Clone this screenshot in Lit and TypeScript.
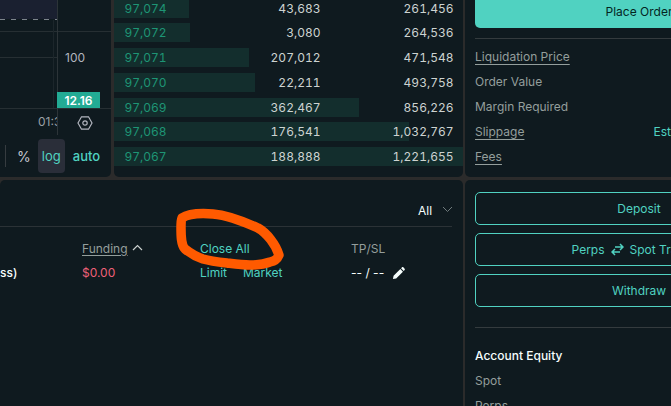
import { LitElement, css, html } from "lit";
import { customElement } from "lit/decorators.js";

const book = [
  { price: "97,074", size: "43,683", total: "261,456", bar: 75 },
  { price: "97,072", size: "3,080", total: "264,536", bar: 76 },
  { price: "97,071", size: "207,012", total: "471,548", bar: 135 },
  { price: "97,070", size: "22,211", total: "493,758", bar: 141 },
  { price: "97,069", size: "362,467", total: "856,226", bar: 245 },
  { price: "97,068", size: "176,541", total: "1,032,767", bar: 295 },
  { price: "97,067", size: "188,888", total: "1,221,655", bar: 349 },
];

@customElement("app-root")
export class AppRoot extends LitElement {
  static styles = css`
    :host {
      display: block;
      position: relative;
      width: 671px;
      height: 406px;
      overflow: hidden;
      background: #2b2b2b;
      font-family: Inter, "Liberation Sans", sans-serif;
      font-size: 12px;
      color: #cdd3d1;
    }
    .page {
      display: grid;
      grid-template-columns: 463px 1fr;
      grid-template-rows: 177px 1fr;
      column-gap: 2px;
      row-gap: 3px;
      height: 406px;
      width: 800px;
    }
    .panel {
      background: #0f1a1f;
      overflow: hidden;
    }
    .top-left {
      display: flex;
      gap: 3px;
      background: #2b2b2b;
      min-width: 0;
    }
    .chart {
      position: relative;
      width: 111px;
      flex: none;
      border-radius: 0 0 5px 0;
    }
    .shade {
      position: absolute;
      left: 0;
      top: 0;
      width: 57px;
      height: 19px;
      background: #1a2030;
    }
    .dash {
      position: absolute;
      left: 0;
      top: 19px;
      width: 57px;
      height: 1px;
      background: repeating-linear-gradient(90deg, #7d848c 0 5px, transparent 5px 11px);
    }
    .vline {
      position: absolute;
      left: 57px;
      top: 0;
      width: 1px;
      height: 135px;
      background: #2c3438;
    }
    .vfaint {
      position: absolute;
      left: 53px;
      top: 20px;
      width: 1px;
      height: 88px;
      background: #1c262b;
    }
    .hline {
      position: absolute;
      left: 0;
      height: 1px;
      background: #262f33;
    }
    .scale {
      position: absolute;
      left: 65px;
      top: 50px;
      font-size: 12px;
      color: #b2b5be;
    }
    .tag {
      position: absolute;
      left: 57px;
      top: 92px;
      width: 43px;
      height: 16px;
      line-height: 17px;
      text-align: center;
      background: #22ab94;
      color: #fff;
      font-size: 12px;
      font-weight: 600;
    }
    .time {
      position: absolute;
      left: 38px;
      top: 114px;
      width: 19px;
      overflow: hidden;
      white-space: nowrap;
      color: #9aa0a6;
    }
    .gear {
      position: absolute;
      left: 77px;
      top: 115px;
    }
    .tools {
      position: absolute;
      left: 5px;
      top: 139px;
      display: flex;
      align-items: center;
      height: 34px;
    }
    .tools i {
      display: block;
      width: 1px;
      height: 22px;
      background: #363c40;
    }
    .tools .pct {
      margin-left: 11px;
      margin-right: 7px;
      font-size: 14px;
      color: #c3c6ce;
    }
    .tools .on {
      width: 27px;
      height: 34px;
      line-height: 34px;
      text-align: center;
      border-radius: 4px;
      background: #2a2e39;
      color: #50d2c1;
      font-size: 13px;
    }
    .tools .auto {
      margin-left: 8px;
      font-size: 13px;
      font-weight: 500;
      color: #50d2c1;
    }
    .orderbook {
      flex: 1;
      display: flex;
      flex-direction: column;
      border-radius: 0 0 5px 5px;
    }
    .rows {
      display: flex;
      flex-direction: column;
      margin-top: -1.3px;
    }
    .row {
      position: relative;
      height: 19px;
      margin-bottom: 5.75px;
      display: grid;
      grid-template-columns: 70px 126px 133px;
      align-items: center;
      padding-left: 10.5px;
    }
    .row .bar {
      position: absolute;
      left: 0;
      top: 0;
      bottom: 0;
      background: #132e2d;
    }
    .row span {
      position: relative;
      text-align: right;
      font-variant-numeric: tabular-nums;
    }
    .row .price {
      text-align: left;
      color: #1e9575;
    }
    .order {
      border-radius: 0 0 0 5px;
      padding: 0 0 0 10px;
    }
    .place {
      width: 328px;
      height: 28px;
      line-height: 23px;
      padding-bottom: 5px;
      box-sizing: border-box;
      text-align: center;
      border-radius: 0 0 0 5px;
      background: #50d2c1;
      color: #04251f;
      font-size: 12px;
    }
    .divider {
      height: 1px;
      background: #343b3e;
      margin-top: 10px;
    }
    .facts {
      display: flex;
      flex-direction: column;
      margin-top: 6px;
      color: #949e9c;
    }
    .facts div {
      height: 25px;
      line-height: 24px;
      display: flex;
    }
    .facts u {
      text-underline-offset: 3px;
    }
    .facts .est {
      margin-left: 129px;
      color: #50d2c1;
    }
    .positions {
      position: relative;
      border-radius: 5px 5px 0 0;
    }
    .filter {
      position: absolute;
      left: 418px;
      top: 23px;
      color: #f6fefd;
      font-weight: 400;
    }
    .rule {
      position: absolute;
      left: 0;
      top: 46px;
      width: 452px;
      height: 1px;
      background: #2b3236;
    }
    .cell {
      position: absolute;
      white-space: nowrap;
    }
    .muted {
      color: #949e9c;
    }
    .link {
      color: #50d2c1;
    }
    .account {
      border-radius: 5px 0 0 0;
      padding: 12px 0 0 10px;
    }
    .account button {
      display: flex;
      align-items: center;
      justify-content: center;
      gap: 6px;
      width: 328px;
      height: 33px;
      margin-bottom: 8px;
      padding: 0;
      background: none;
      border: 1px solid #50d2c1;
      border-radius: 5px;
      color: #50d2c1;
      font: inherit;
    }
    .account hr {
      height: 1px;
      margin: 20px 0 0;
      border: 0;
      background: #343b3e;
    }
    .account h4 {
      margin: 20px 0 0;
      font-size: 12px;
      line-height: 16px;
      font-weight: 500;
      color: #f6fefd;
    }
    .account p {
      margin: 9px 0 0;
      line-height: 16px;
      color: #949e9c;
    }
    .scribble {
      position: absolute;
      left: 170px;
      top: 200px;
      pointer-events: none;
    }
  `;

  render() {
    return html`
      <div class="page">
        <div class="top-left">
          <div class="panel chart">
            <div class="shade"></div>
            <div class="dash"></div>
            <div class="hline" style="top:31px;width:111px"></div>
            <div class="hline" style="top:57px;width:57px"></div>
            <div class="hline" style="top:108px;width:111px"></div>
            <div class="vfaint"></div>
            <div class="vline"></div>
            <div class="scale">100</div>
            <div class="tag">12.16</div>
            <div class="time">01:30</div>
            <svg class="gear" width="16" height="16" viewBox="0 0 16 16" fill="none" stroke="#b2b5be" stroke-width="1.2">
              <path d="M4.5 1.8h7L15 8l-3.500 6.200h-7L1 8z" />
              <circle cx="8" cy="8" r="2.200" />
            </svg>
            <div class="tools">
              <i></i>
              <span class="pct">%</span>
              <span class="on">log</span>
              <span class="auto">auto</span>
            </div>
          </div>
          <div class="panel orderbook">
            <div class="rows">
              ${book.map(
                (r) => html`
                  <div class="row">
                    <div class="bar" style="width:${r.bar}px"></div>
                    <span class="price">${r.price}</span>
                    <span>${r.size}</span>
                    <span>${r.total}</span>
                  </div>
                `
              )}
            </div>
          </div>
        </div>
        <div class="panel order">
          <div class="place">Place Order</div>
          <div class="divider"></div>
          <div class="facts">
            <div><u>Liquidation Price</u></div>
            <div>Order Value</div>
            <div>Margin Required</div>
            <div><u>Slippage</u><span class="est">Est</span></div>
            <div><u>Fees</u></div>
          </div>
        </div>
        <div class="panel positions">
          <div class="filter">All</div>
          <svg class="cell" style="left:442px;top:26px" width="11" height="7" viewBox="0 0 11 7" fill="none" stroke="#6f7a7c" stroke-width="1"><path d="M1 1l4.500 4.500L10 1" /></svg>
          <div class="rule"></div>
          <u class="cell muted" style="left:82px;top:61px;text-underline-offset:2px">Funding</u>
          <svg class="cell" style="left:132px;top:64px" width="11" height="7" viewBox="0 0 11 7" fill="none" stroke="#c9cfcd" stroke-width="1.200"><path d="M1 6l4.500-4.500L10 6" /></svg>
          <div class="cell link" style="left:200px;top:61px">Close All</div>
          <div class="cell muted" style="left:351px;top:61px">TP/SL</div>
          <div class="cell" style="left:0;top:85px;color:#f6fefd;font-weight:500">ss)</div>
          <div class="cell" style="left:82px;top:85px;color:#ed6078">$0.00</div>
          <div class="cell link" style="left:200px;top:85px">Limit</div>
          <div class="cell link" style="left:243px;top:85px">Market</div>
          <div class="cell" style="left:351px;top:85px;color:#f6fefd">-- / --</div>
          <svg class="cell" style="left:392px;top:87px" width="13" height="13" viewBox="0 0 14 14" fill="#f6fefd"><path d="M1 13l.7-3.500L9 2.200l2.800 2.800L4.500 12.300zM9.800 1.400l1-1c.4-.4 1-.4 1.400 0l1.400 1.400c.4.4.4 1 0 1.400l-1 1z" /></svg>
        </div>
        <div class="panel account">
          <button>Deposit</button>
          <button>
            Perps
            <svg width="13" height="13" viewBox="0 0 13 13" fill="none" stroke="#50d2c1" stroke-width="1.500"><path d="M12 4H4M9 1l3 3-3 3M1 9h8M4 6L1 9l3 3" /></svg>
            Spot Transfer
          </button>
          <button>Withdraw</button>
          <hr />
          <h4>Account Equity</h4>
          <p>Spot</p>
          <p>Perps</p>
        </div>
      </div>
      <svg class="scribble" width="120" height="75" viewBox="0 0 120 75" fill="none" stroke="#ff5a00" stroke-width="9.500" stroke-linecap="round" stroke-linejoin="round">
        <path d="M12 18C18 14 30 13 43 14C55 15 68 19 88 28C97 33 106 45 109 55C107 60 104 61 100 62C92 65 86 65 80 65C72 65 65 64 57 63C48 62 40 61 33 59C27 57 20 53 15 49C11 45 11 35 11 28C11 24 11 20 12 18Z" />
      </svg>
    `;
  }
}
